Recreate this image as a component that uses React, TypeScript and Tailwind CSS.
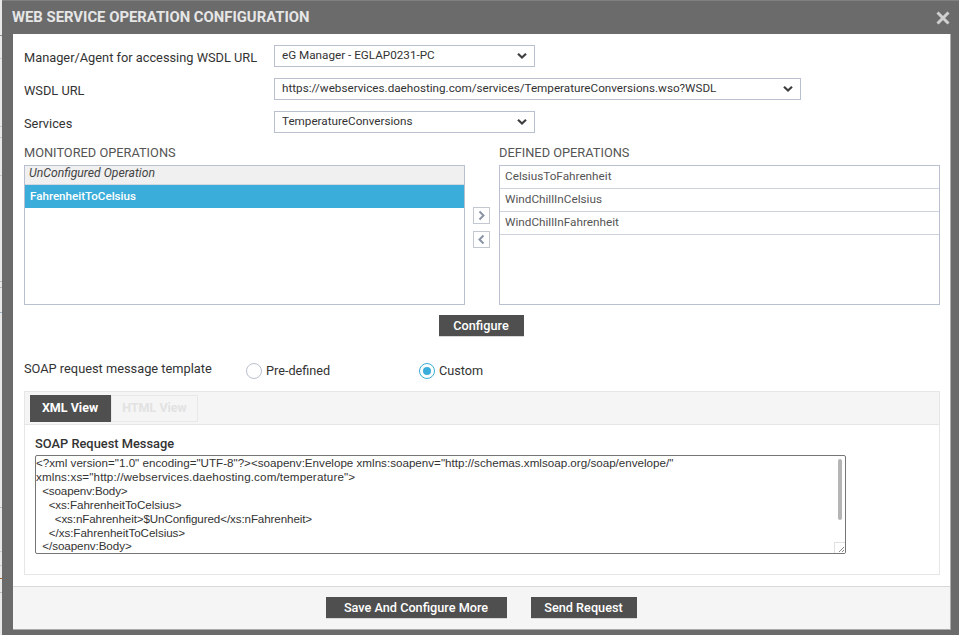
const Chevron = () => (
  <svg width="12" height="8" viewBox="0 0 12 8" className="shrink-0">
    <path d="M2 1.8 L6 5.6 L10 1.8" fill="none" stroke="#3f3f3f" strokeWidth="2.2" />
  </svg>
);

function Select({ text, w }: { text: string; w: string }) {
  return (
    <div className={`${w} h-full border border-[#b9c0cf] bg-white flex items-center justify-between pl-[7px] pr-[6px] text-[11.7px] text-[#333]`}>
      <span className="whitespace-nowrap">{text}</span>
      <Chevron />
    </div>
  );
}

function Row({ label, children, cls }: { label: string; children: React.ReactNode; cls: string }) {
  return (
    <div className={`flex items-center ${cls}`}>
      <div className="w-[250px] text-[12.8px] text-[#333] pt-[3px]">{label}</div>
      {children}
    </div>
  );
}

function Btn({ children, w }: { children: React.ReactNode; w: string }) {
  return (
    <div className={`${w} h-[22px] bg-[#4f4f4f] border-b border-[#d8d8d8] text-white font-medium text-[12.7px] flex items-center justify-center`}>
      {children}
    </div>
  );
}

function Arrow({ d }: { d: string }) {
  return (
    <div className="w-[17px] h-[17px] border-[1.5px] border-[#c3c7d0] bg-white flex items-center justify-center">
      <svg width="9" height="11" viewBox="0 0 9 11">
        <path d={d} fill="none" stroke="#8a93a5" strokeWidth="2" />
      </svg>
    </div>
  );
}

const marks = [
  { y: 35, c: "bg-[#8a8f96]" },
  { y: 58, c: "bg-[#cccccc]" },
  { y: 126, c: "bg-[#cccccc]" },
  { y: 137, c: "bg-[#cccccc]" },
  { y: 175, c: "bg-[#cccccc]" },
  { y: 281, c: "bg-[#bbbbbb]" },
  { y: 287, c: "bg-[#bbbbbb]" },
  { y: 312, c: "bg-[#9fb0c0]" },
  { y: 507, c: "bg-[#bbbbbb]" },
  { y: 551, c: "bg-[#cccccc]" },
  { y: 565, c: "bg-[#cccccc]" },
  { y: 578, c: "bg-[#a8652c]" },
  { y: 592, c: "bg-[#bbbbbb]" },
];

export default function App() {
  const defined = ["CelsiusToFahrenheit", "WindChillInCelsius", "WindChillInFahrenheit"];
  return (
    <div className="w-[959px] h-[635px] overflow-hidden bg-[#e8e8e8] flex font-['Roboto',sans-serif]">
      <div className="relative w-[2px] h-full shrink-0">
        {marks.map((m) => (
          <div key={m.y} className={`absolute left-0 w-[2px] h-[1px] ${m.c}`} style={{ top: m.y }} />
        ))}
      </div>
      <div className="w-[957px] h-[635px] bg-[#6b6b6b] border-t border-[#808080] flex flex-col pl-[11px] pr-[8px]">
        <div className="h-[33px] shrink-0 flex items-center justify-between">
          <div className="text-[14.85px] font-bold text-[#e6e6e6] -ml-[1px]">WEB SERVICE OPERATION CONFIGURATION</div>
          <svg width="14" height="14" viewBox="0 0 14 14" className="mr-[1px]">
            <path d="M1.5 1.5 L12.5 12.5 M12.5 1.5 L1.5 12.5" stroke="#d0d0d0" strokeWidth="3" />
          </svg>
        </div>
        <div className="w-[938px] h-[596px] bg-white flex flex-col border-r border-b border-[#ababab]">
          <div className="flex-1 pl-[11px] pr-[10px] pt-[11px]">
            <Row label="Manager/Agent for accessing WSDL URL" cls="h-[22px]">
              <Select text="eG Manager - EGLAP0231-PC" w="w-[261px]" />
            </Row>
            <Row label="WSDL URL" cls="h-[22px] mt-[11px]">
              <Select text="https://webservices.daehosting.com/services/TemperatureConversions.wso?WSDL" w="w-[527px]" />
            </Row>
            <Row label="Services" cls="h-[22px] mt-[11px]">
              <Select text="TemperatureConversions" w="w-[261px]" />
            </Row>

            <div className="flex mt-[11px]">
              <div className="w-[441px]">
                <div className="text-[12.8px] leading-[16px] text-[#555] h-[21px] pt-[1px]">MONITORED OPERATIONS</div>
                <div className="h-[140px] border border-[#b9c0cf]">
                  <div className="h-[19px] bg-[#f0f0f0] border-b border-[#d5d8df] text-[12.2px] italic text-[#444] pl-[4px] leading-[15px]">UnConfigured Operation</div>
                  <div className="h-[23px] bg-[#3badda] text-white font-medium text-[11.6px] pl-[5px] flex items-center">FahrenheitToCelsius</div>
                </div>
              </div>
              <div className="w-[34px] flex flex-col items-center pt-[63px] gap-[7px] pr-[1px]">
                <Arrow d="M2.5 1.5 L6.5 5.5 L2.5 9.5" />
                <Arrow d="M6.5 1.5 L2.5 5.5 L6.5 9.5" />
              </div>
              <div className="w-[441px]">
                <div className="text-[12.8px] leading-[16px] text-[#555] h-[21px] pt-[1px]">DEFINED OPERATIONS</div>
                <div className="h-[140px] border border-[#b9c0cf]">
                  {defined.map((d) => (
                    <div key={d} className="h-[23px] border-b border-[#cdd2dc] text-[11.75px] text-[#555] pl-[5px] flex items-center">{d}</div>
                  ))}
                </div>
              </div>
            </div>

            <div className="flex justify-center mt-[10px] pr-[2px]">
              <Btn w="w-[85px]">Configure</Btn>
            </div>

            <div className="flex items-center h-[20px] mt-[24px] text-[#333]">
              <div className="w-[222px] text-[12.8px] -mt-[4px]">SOAP request message template</div>
              <div className="w-[173px] flex items-center text-[12.7px]">
                <span className="w-[16px] h-[16px] rounded-full border border-[#b9c0cf] mr-[4px]" />
                Pre-defined
              </div>
              <div className="flex items-center text-[12.7px]">
                <span className="w-[16px] h-[16px] rounded-full border border-[#3badda] mr-[4px] flex items-center justify-center">
                  <span className="w-[8px] h-[8px] rounded-full bg-[#3badda]" />
                </span>
                Custom
              </div>
            </div>

            <div className="mt-[10px] w-[916px] h-[184px] border border-[#e6e6e6]">
              <div className="h-[33px] bg-[#f5f5f5] border-b border-[#e6e6e6] flex items-start pt-[3px] pl-[5px]">
                <div className="w-[81px] h-[27px] bg-[#4f4f4f] text-white font-bold text-[12.5px] flex items-center justify-center pr-[1px]">XML View</div>
                <div className="w-[87px] h-[27px] border border-[#e8e8e8] text-[#e2e2e2] font-bold text-[12.5px] flex items-center justify-center">HTML View</div>
              </div>
              <div className="pl-[10px] pt-[11px]">
                <div className="text-[12.85px] font-medium text-[#333] leading-[16px]">SOAP Request Message</div>
                <div className="relative mt-[3px] w-[811px] h-[99px] border border-[#767676] rounded-[2px] overflow-hidden font-['Liberation_Sans',sans-serif] text-[11.64px] leading-[13.9px] text-[#333] whitespace-pre">
                  <div>{`<?xml version="1.0" encoding="UTF-8"?><soapenv:Envelope xmlns:soapenv="http://schemas.xmlsoap.org/soap/envelope/"`}</div>
                  <div className="tracking-[0.14px]">{`xmlns:xs="http://webservices.daehosting.com/temperature">`}</div>
                  <div className="tracking-[-0.14px]">{`  <soapenv:Body>`}</div>
                  <div className="tracking-[-0.07px]">{`    <xs:FahrenheitToCelsius>`}</div>
                  <div className="tracking-[-0.11px]">{`      <xs:nFahrenheit>$UnConfigured</xs:nFahrenheit>`}</div>
                  <div className="tracking-[-0.05px]">{`    </xs:FahrenheitToCelsius>`}</div>
                  <div className="tracking-[-0.08px]">{`  </soapenv:Body>`}</div>
                  <div className="absolute right-[3px] top-[3px] w-[4px] h-[61px] rounded-full bg-[#b5b5b5]" />
                  <div className="absolute right-0 bottom-0 w-[11px] h-[11px] bg-white border-l border-t border-[#e0e0e0]">
                    <svg width="10" height="10" viewBox="0 0 10 10">
                      <path d="M9 4 L4 9 M9 7 L7 9" stroke="#888" strokeWidth="1" />
                    </svg>
                  </div>
                </div>
              </div>
            </div>
          </div>
          <div className="h-[43px] shrink-0 bg-[#f5f5f5] border-t border-[#d8d8d8] flex items-start justify-center pt-[10px] gap-[24px] pr-[1px]">
            <Btn w="w-[181px]">Save And Configure More</Btn>
            <Btn w="w-[106px]">Send Request</Btn>
          </div>
        </div>
      </div>
    </div>
  );
}
